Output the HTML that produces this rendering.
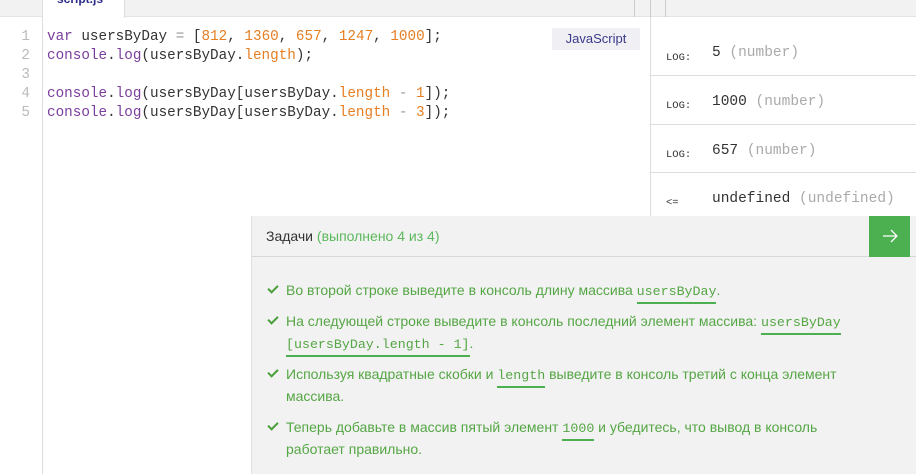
<!DOCTYPE html>
<html><head><meta charset="utf-8"><style>
*{margin:0;padding:0;box-sizing:border-box}
body{width:916px;height:474px;overflow:hidden;background:#fff;position:relative;font-family:"Liberation Sans","DejaVu Sans",sans-serif}
.topbar{position:absolute;left:0;top:0;width:916px;height:17px;background:#f2f2f2;border-bottom:1px solid #e4e4e4}
.gutter{position:absolute;left:42px;top:17px;width:1px;height:457px;background:#ddd}
.tab{position:absolute;left:42px;top:0;width:83px;height:18px;background:#fff;border-left:1px solid #ddd;border-right:1px solid #ddd}
.tab span{position:absolute;left:14px;top:-8px;font-size:12px;font-weight:bold;color:#2a2a8a}
.code{position:absolute;left:47px;top:28px;font-family:"Liberation Mono",monospace;font-size:14.3px;line-height:19px;color:#333;white-space:pre}
.ln{position:absolute;left:0;top:28px;width:30px;text-align:right;font-family:"Liberation Mono",monospace;font-size:14.3px;line-height:19px;color:#bbb;white-space:pre}
.p{color:#7a3e9d}.n{color:#e67e22}.o{color:#999}.l{color:#e67e22}
.js{position:absolute;left:552px;top:28px;width:88px;height:22px;background:#f0f0f4;color:#3a3a8a;font-size:13px;line-height:22px;text-align:center}
.vl{position:absolute;top:0;height:17px;width:1px;background:#ccc}
.console{position:absolute;left:650px;top:17px;width:266px;height:200px;border-left:1px solid #ddd;background:#fff}
.row{height:48.5px;border-bottom:1px solid #ddd;position:relative;font-family:"Liberation Mono",monospace;font-size:14.5px;color:#333}
.row .t{position:absolute;left:15px;top:24px;font-size:10.5px;color:#333}
.row .v{position:absolute;left:61px;top:18px}
.row .g{color:#aaa}
.tasks{position:absolute;left:251px;top:216px;width:665px;height:258px;background:#f2f2f2;border-left:1px solid #e0e0e0}
.th{height:41px;border-bottom:1px solid #d8d8d8;position:relative}
.th span{position:absolute;left:14px;top:12px;font-size:14px;color:#333}
.th em{font-style:normal;color:#5cb85c}
.btn{position:absolute;left:617px;top:0;width:41px;height:41px;background:#4caf50;text-align:center}
.btn svg{margin-top:12px}
.list{position:absolute;left:0;top:63px;width:620px}
.item{position:relative;padding-left:34px;font-size:14px;line-height:22.5px;color:#55a645;margin-bottom:8px}
.item:before{content:"";position:absolute;left:16px;top:6px;width:8px;height:4px;border-left:2px solid #4a9e3a;border-bottom:2px solid #4a9e3a;transform:rotate(-45deg)}
code{font-family:"Liberation Mono",monospace;font-size:13.3px;line-height:1;border-bottom:2px solid #4caf50;padding-bottom:3px}
</style></head><body>
<div class="topbar"></div>
<div class="vl" style="left:634px"></div><div class="vl" style="left:650px"></div><div class="vl" style="left:665px"></div>
<div class="gutter"></div>
<div class="tab"><span>script.js</span></div>
<div class="ln">1
2
3
4
5</div>
<div class="code"><span class="p">var</span> usersByDay <span class="o">=</span> [<span class="n">812</span>, <span class="n">1360</span>, <span class="n">657</span>, <span class="n">1247</span>, <span class="n">1000</span>];
<span class="p">console</span>.<span class="p">log</span>(usersByDay.<span class="l">length</span>);

<span class="p">console</span>.<span class="p">log</span>(usersByDay[usersByDay.<span class="l">length</span> <span class="o">-</span> <span class="n">1</span>]);
<span class="p">console</span>.<span class="p">log</span>(usersByDay[usersByDay.<span class="l">length</span> <span class="o">-</span> <span class="n">3</span>]);</div>
<div class="js">JavaScript</div>
<div class="console">
<div class="row" style="height:59px"><span class="t" style="top:35px">LOG:</span><span class="v" style="top:28px">5 <span class="g">(number)</span></span></div>
<div class="row"><span class="t">LOG:</span><span class="v">1000 <span class="g">(number)</span></span></div>
<div class="row"><span class="t">LOG:</span><span class="v">657 <span class="g">(number)</span></span></div>
<div class="row" style="border:0"><span class="t">&lt;=</span><span class="v">undefined <span class="g">(undefined)</span></span></div>
</div>
<div class="tasks">
<div class="th"><span>Задачи <em>(выполнено 4 из 4)</em></span><div class="btn"><svg width="16" height="16" viewBox="0 0 16 16"><path d="M1 8H15M9 2L15 8L9 14" stroke="#fff" stroke-width="1.3" fill="none"/></svg></div></div>
<div class="list">
<div class="item">Во второй строке выведите в консоль длину массива <code>usersByDay</code>.</div>
<div class="item">На следующей строке выведите в консоль последний элемент массива: <code>usersByDay [usersByDay.length - 1]</code>.</div>
<div class="item">Используя квадратные скобки и <code>length</code> выведите в консоль третий с конца элемент массива.</div>
<div class="item">Теперь добавьте в массив пятый элемент <code>1000</code> и убедитесь, что вывод в консоль работает правильно.</div>
</div>
</div>
</body></html>
